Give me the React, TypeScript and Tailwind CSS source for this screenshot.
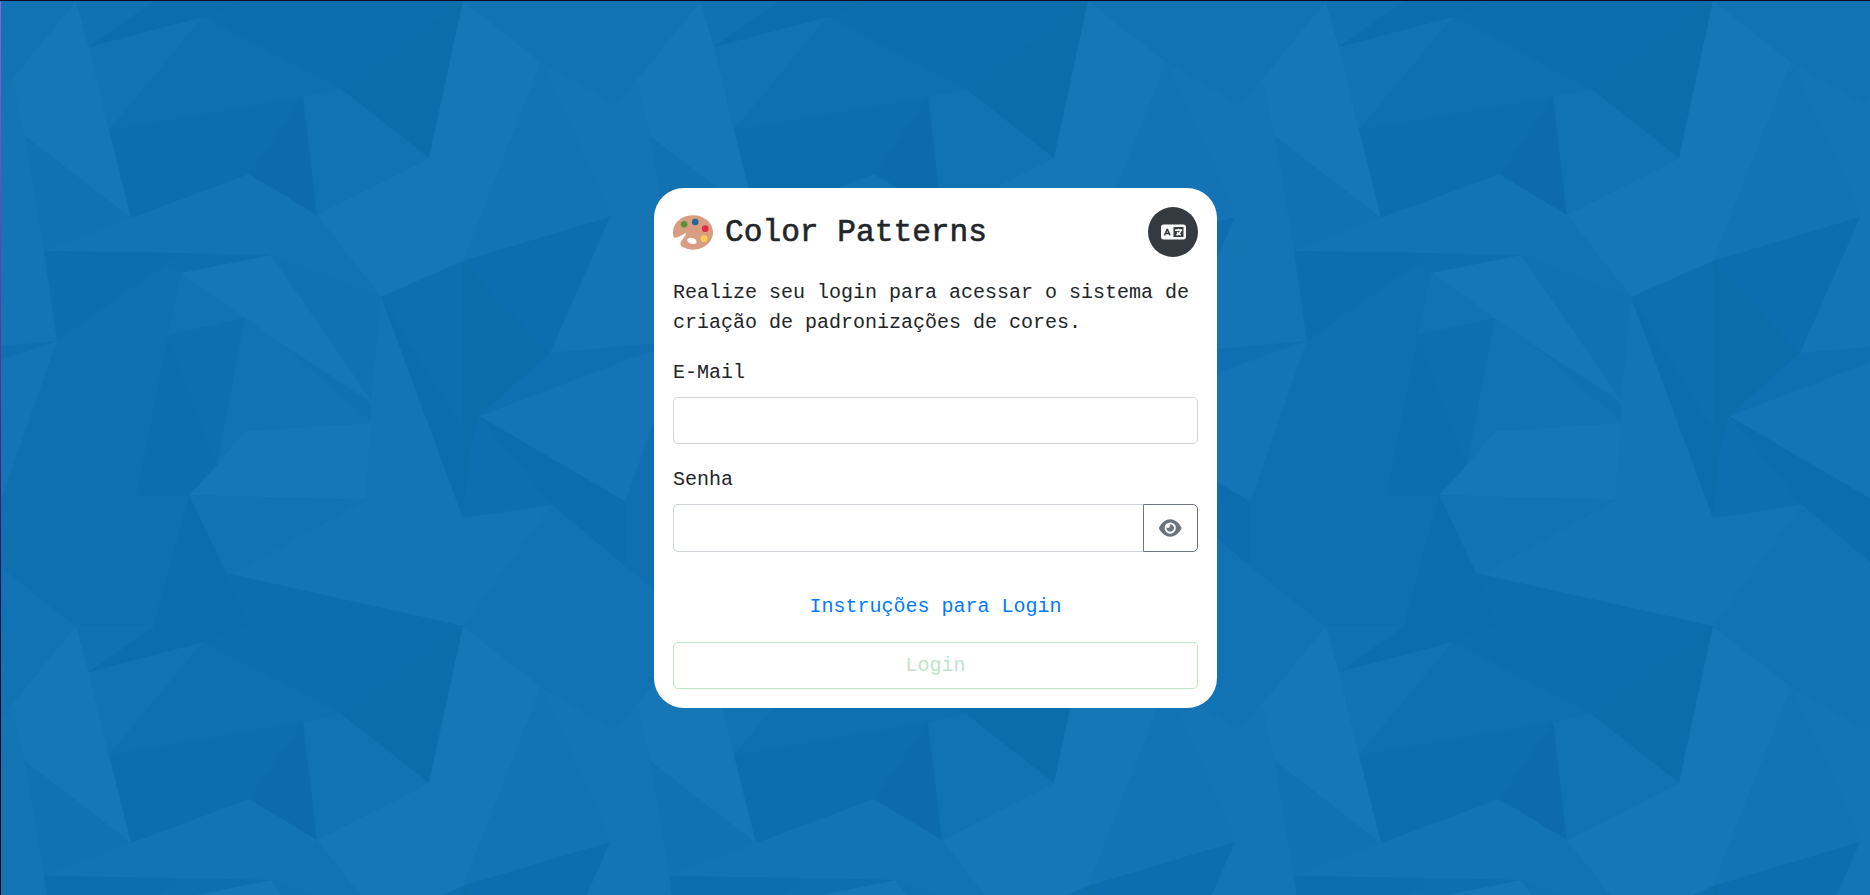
import { FaEye, FaLanguage } from "react-icons/fa6";

const TILE = 625;

const FACETS: [string, string][] = [
  // lit faces
  ["#1776b5", "76,1 89,47 131,218 25,136 12,80"],
  ["#1776b5", "463,1 541,62 500,180 465,261 381,297 317,215 429,158"],
  ["#1776b5", "181,273 271,255 371,400 283,345 245,318"],
  ["#1776b5", "245,431 371,423 365,500 189,495 217,465"],
  // middle faces
  ["#1171b1", "153,1 76,1 89,47"],
  ["#1272b2", "89,47 203,17 109,130"],
  ["#1273b2", "303,97 341,89 429,158 317,215"],
  ["#1271b1", "25,136 131,218 70,243 44,251"],
  ["#1374b4", "131,218 249,174 317,215 271,255 44,251"],
  ["#1273b4", "271,255 317,215 381,297"],
  ["#1171b1", "271,255 381,297 371,400"],
  ["#1272b3", "181,273 245,318 168,335"],
  ["#1273b3", "245,318 283,345 371,421 371,423 245,431 217,465"],
  ["#1070b0", "283,345 371,403 371,421"],
  ["#1272b2", "189,495 365,500 240,570 226,573"],
  ["#1273b4", "463,1 541,62 615,105 701,1 626,-58 552,-120"],
  ["#1373b4", "541,62 600,190 610,217 463,261"],
  ["#1474b5", "479,416 682,341 626,502"],
  // shaded faces
  ["#0f6fb0", "203,17 341,89 303,97 109,130"],
  ["#0e6dad", "109,130 303,97 249,174 131,218"],
  ["#0d6bab", "303,97 317,215 249,174"],
  ["#0e6dac", "44,251 181,253 165,265 57,341"],
  ["#0f6eae", "181,253 271,255 181,273 165,265"],
  ["#106fb0", "57,341 165,265 181,273 168,335 136,497 1,500"],
  ["#0e6dae", "168,335 217,465 189,495 136,497"],
  ["#0f6eaf", "168,335 245,318 217,465"],
  ["#0f6eaf", "381,297 463,261 463,440"],
  ["#0d6cac", "381,297 463,430 463,518"],
  ["#0d6caa", "463,261 550,353 479,416 470,450 463,518"],
  ["#0e6dae", "463,261 610,217 550,353"],
  ["#0f6fb0", "479,416 550,353 682,341 626,360"],
  ["#0d6cac", "479,416 626,502 552,505"],
  ["#0f6eaf", "479,416 552,505 463,518 470,450"],
  ["#0e6dae", "626,502 552,505 626,567"],
  ["#0f6faf", "1,500 189,495 153,628 89,672 75,626 1,567"],
  ["#0d6cab", "189,495 226,573 250,627 203,642 89,672 153,628"],
  ["#0e6dad", "226,573 463,626 341,714 203,642 250,627"],
  ["#0d6caa", "463,626 429,783 341,714"],
];

const OFFSETS = [-1, 0, 1, 2].flatMap((c) => [-1, 0, 1].map((r) => [c * TILE, r * TILE]));

function Background() {
  return (
    <svg className="absolute inset-0 h-full w-full" aria-hidden="true">
      <defs>
        <g id="facets">
          {FACETS.map(([fill, points]) => (
            <polygon key={points} points={points} fill={fill} />
          ))}
        </g>
        <linearGradient id="edge" x1="0" y1="0" x2="0" y2="1">
          <stop offset="0" stopColor="#8a63e0" />
          <stop offset="0.45" stopColor="#5b2b85" />
          <stop offset="0.8" stopColor="#0b0a18" />
          <stop offset="1" stopColor="#05070f" />
        </linearGradient>
      </defs>
      <rect width="100%" height="100%" fill="#1474b4" />
      {OFFSETS.map(([x, y]) => (
        <use key={`${x}:${y}`} href="#facets" x={x} y={y} />
      ))}
      <rect width="1" height="100%" fill="url(#edge)" />
      <rect width="100%" height="1" fill="#0d0b24" />
    </svg>
  );
}

function Palette() {
  return (
    <svg viewBox="0 0 36 36" className="h-10 w-10 shrink-0" aria-hidden="true">
      <path
        fill="#d99e82"
        fillRule="evenodd"
        d="M18 3C8 3 0 9.700 0 18c0 2 .2 3.700 .9 5.100 2.300.3 5.500-1.200 8.800-3.400 1.500-1 2.500-.3 1.700.9C9.600 23.200 7.400 25.500 6.700 28c-.3 1.700.7 3.100 2.500 3.700C11.900 33 14.900 34 18 34c10 0 18-7.200 18-15.700S28 3 18 3zm-3.200 20.300c2.200-.5 5.200.5 6.100 2.300.9 1.900 0 3.200-2.400 3.200-2.500 0-5.100-1-5.600-2.900-.4-1.300.4-2.300 1.900-2.600z"
      />
      <circle cx="10" cy="11" r="3" fill="#5c913b" />
      <circle cx="20" cy="9" r="3" fill="#226699" />
      <circle cx="29" cy="15" r="3" fill="#dd2e44" />
      <circle cx="28" cy="24" r="3" fill="#ffcc4d" />
    </svg>
  );
}

export default function App() {
  return (
    <div className="relative flex h-screen w-full items-center justify-center overflow-hidden bg-[#1474b4] font-['Liberation_Mono',monospace] text-[20px] leading-[30px] text-[#212529]">
      <Background />
      <main className="relative mt-px ml-px h-[520px] w-[563px] rounded-[30px] bg-white px-[19px] pt-[19px]">
        <header className="mb-[21px] flex h-[50px] items-center">
          <Palette />
          <h1 className="mt-0.5 ml-3 grow text-[31.200px] leading-none font-normal [-webkit-text-stroke:0.6px_#212529]">
            Color Patterns
          </h1>
          <button
            type="button"
            aria-label="Idioma"
            className="flex h-[50px] w-[50px] items-center justify-center rounded-full bg-[#343a40] text-white"
          >
            <FaLanguage className="h-5 w-[25px]" />
          </button>
        </header>
        <p className="mb-5">Realize seu login para acessar o sistema de criação de padronizações de cores.</p>
        <form>
          <label htmlFor="email" className="mb-[9px] block">
            E-Mail
          </label>
          <input id="email" className="mb-[21px] block h-[47px] w-full rounded-[5px] border border-[#ced4da] px-4" />
          <label htmlFor="password" className="mb-[9px] block">
            Senha
          </label>
          <div className="mb-10 flex h-12">
            <input
              id="password"
              type="password"
              className="min-w-0 grow rounded-l-[5px] border border-r-0 border-[#ced4da] px-4"
            />
            <button
              type="button"
              aria-label="Mostrar senha"
              className="flex w-[55px] items-center justify-center rounded-r-[5px] border border-[#6c757d] text-[#6c757d]"
            >
              <FaEye className="h-5 w-[22.500px]" />
            </button>
          </div>
          <a href="#" className="mb-5 block text-center text-[#007bff]">
            Instruções para Login
          </a>
          <button
            type="button"
            disabled
            className="block h-[47px] w-full rounded-[5px] border border-[#bee5c7] pt-px text-[#bee5c7]"
          >
            Login
          </button>
        </form>
      </main>
    </div>
  );
}
